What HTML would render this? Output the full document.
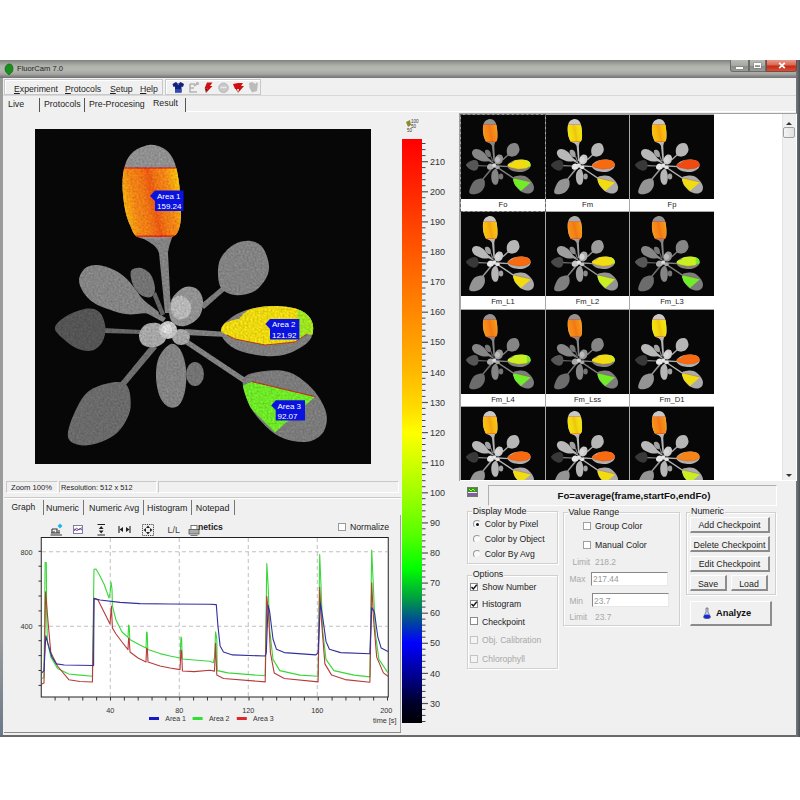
<!DOCTYPE html>
<html><head><meta charset="utf-8">
<style>
*{margin:0;padding:0;box-sizing:border-box}
html,body{width:800px;height:800px;background:#fff;overflow:hidden;font-family:"Liberation Sans",sans-serif;font-size:9px;color:#222}
.a{position:absolute}
.t{position:absolute;white-space:nowrap;line-height:1}
.gb{position:absolute;border:1px solid #d0d0d0;box-shadow:inset 1px 1px 0 #fff,1px 1px 0 #fff}
.gl{position:absolute;background:#f0f0f0;padding:0 1px;line-height:1;white-space:nowrap;color:#222}
.cb{position:absolute;width:8px;height:8px;border:1px solid #8a8a8a;background:#fff}
.cbd{border-color:#c4c4c4;background:#f4f4f4}
.btn{position:absolute;background:#f0f0f0;border-top:1px solid #fff;border-left:1px solid #fff;border-right:2px solid #8c8c8c;border-bottom:2px solid #8c8c8c}
.dis{color:#a8a8a8}
</style></head><body>

<div class="a" style="left:0;top:60px;width:800px;height:677px;background:#8c8e8e"></div>
<div class="a" style="left:0;top:60px;width:800px;height:18px;background:linear-gradient(#7c7e7c 0,#8a8c88 1px,#b0b2ac 6px,#b4b6b0 10px,#a4a6a2 14px,#7c7c7c 17px,#727272 18px)"></div>
<div class="a" style="left:0;top:78px;width:3px;height:659px;background:linear-gradient(#9a9c9c,#9a9c9c 85%,#6a7888)"></div>
<div class="a" style="left:3px;top:78px;width:793px;height:657px;background:#f0f0f0"></div>
<div class="a" style="left:0;top:735px;width:800px;height:2px;background:#6a6a6a"></div>
<div class="a" style="left:796px;top:60px;width:4px;height:677px;background:linear-gradient(90deg,#7a7a7a,#4a5058)"></div>
<div class="a" style="left:730px;top:60px;width:19px;height:12px;background:linear-gradient(#b8bab6,#a6a8a4 50%,#8a8c8a 55%,#9a9c9a);border:1px solid #6a6c6a;border-top:none;border-radius:0 0 0 3px"></div>
<div class="a" style="left:736px;top:67px;width:7px;height:2px;background:#fff;box-shadow:0 0 1px #444"></div>
<div class="a" style="left:749px;top:60px;width:17px;height:12px;background:linear-gradient(#b8bab6,#a6a8a4 50%,#8a8c8a 55%,#9a9c9a);border:1px solid #6a6c6a;border-top:none"></div>
<div class="a" style="left:753.5px;top:63px;width:7px;height:5px;border:1.5px solid #fff;border-top-width:2px;box-shadow:0 0 1px #444"></div>
<div class="a" style="left:766px;top:60px;width:31px;height:12px;background:linear-gradient(#e89888,#d86a58 45%,#c42a14 55%,#d65038);border:1px solid #7a4a40;border-top:none;border-radius:0 0 3px 0"></div>
<svg class="a" style="left:778px;top:62px" width="8" height="7" viewBox="0 0 8 7"><path d="M1.2 0.8 L6.8 6.2 M6.8 0.8 L1.2 6.2" stroke="#fff" stroke-width="1.8"/></svg>
<svg class="a" style="left:4px;top:63px" width="10" height="13" viewBox="0 0 10 13"><path d="M5 12 C3 10 1 9 1 6 C1 3 3 1 5 1 C8 1 9 3 9 6 C9 9 7 10 5 12Z" fill="#1b8f1b" stroke="#0a5a0a" stroke-width="0.6"/></svg>
<div class="t" style="left:17px;top:65.07px;font-size:7.6px;color:#1e1e1e">FluorCam 7.0</div>
<div class="a" style="left:3px;top:78px;width:793px;height:18px;background:#f0f0f0;border-bottom:1px solid #d8d8d8"></div>
<div class="a" style="left:4px;top:79px;width:159px;height:16px;border:1px solid #c8c8c8;box-shadow:inset 1px 1px 0 #fff"></div>
<div class="a" style="left:165px;top:79px;width:96px;height:16px;border:1px solid #c8c8c8;box-shadow:inset 1px 1px 0 #fff"></div>
<div class="t" style="left:14px;top:84.74px;font-size:8.7px;color:#1e1e1e"><u>E</u>xperiment</div>
<div class="t" style="left:65px;top:84.74px;font-size:8.7px;color:#1e1e1e"><u>P</u>rotocols</div>
<div class="t" style="left:110px;top:84.74px;font-size:8.7px;color:#1e1e1e"><u>S</u>etup</div>
<div class="t" style="left:140px;top:84.74px;font-size:8.7px;color:#1e1e1e"><u>H</u>elp</div>
<svg class="a" style="left:170px;top:80px" width="92" height="14" viewBox="0 0 92 14">
<path d="M2.5 4 L6 2 L7.5 3.2 L9 3.2 L10.5 2 L14 4 L13 7 L11.5 6.5 L11.5 12.5 L5 12.5 L5 6.5 L3.5 7Z" fill="#14207a"/><path d="M5 9 L11.5 9 L11.5 12.5 L5 12.5Z" fill="#2a4ab8"/><path d="M7 3.5 L9.5 3.5 L8.2 5Z" fill="#8ab0ff"/>
<path d="M20 4 L25 4 M20 4 L20 12 L27 12 M20 8 L24 8 M24 6 L28 3 M26 3 L28 3 L28 5" stroke="#b4b4b4" stroke-width="1.6" fill="none"/>
<path d="M37 2.5 L42.5 2.5 L40 6 L42.5 6 L36 13 L37.5 8.5 L34.5 8.5Z" fill="#d01010"/><path d="M36 13 L37.5 8.5 L35 8.5Z" fill="#600"/>
<circle cx="53.5" cy="7.8" r="4.8" fill="#c8c8c8" stroke="#b0b0b0" stroke-width="0.8"/><path d="M50.5 7.5 L56.5 7.5" stroke="#e8e8e8" stroke-width="1.5"/>
<path d="M63 4 L68 3 L73 3 L71 6 L74 6 L68 13 L69 9 L65 9Z" fill="#d01010"/><path d="M66 9 L68 13 L67 9Z" fill="#500"/>
<path d="M79 3 L82 2 L86 4 L86 2.5 L88 3 L87 11 L82 12.5 L79.5 8Z" fill="#bcbcbc"/>
</svg>
<div class="t" style="left:8px;top:100.35px;font-size:8.8px;color:#1e1e1e">Live</div>
<div class="t" style="left:44px;top:100.35px;font-size:8.8px;color:#1e1e1e">Protocols</div>
<div class="t" style="left:89px;top:100.35px;font-size:8.8px;color:#1e1e1e">Pre-Procesing</div>
<div class="t" style="left:153px;top:98.85px;font-size:8.8px;color:#1e1e1e">Result</div>
<div class="a" style="left:39px;top:98px;width:1px;height:14px;background:#555"></div>
<div class="a" style="left:84px;top:98px;width:1px;height:14px;background:#555"></div>
<div class="a" style="left:185px;top:98px;width:1px;height:14px;background:#555"></div>
<div class="a" style="left:186px;top:111px;width:610px;height:1px;background:#fff"></div>
<svg width="0" height="0" style="position:absolute"><defs>
<filter id="soft" x="-5%" y="-5%" width="110%" height="110%"><feGaussianBlur stdDeviation="0.7"/></filter>
<linearGradient id="eg1" x1="0" x2="1" y1="0.62" y2="0.38"><stop offset="0" stop-color="#ff0" stop-opacity="0.55"/><stop offset="0.25" stop-color="#ff0" stop-opacity="0.1"/><stop offset="0.55" stop-color="#d00" stop-opacity="0.25"/><stop offset="0.8" stop-color="#ff0" stop-opacity="0.1"/><stop offset="1" stop-color="#ff0" stop-opacity="0.55"/></linearGradient>
<clipPath id="c1"><path d="M113.8 16.0 C118.8 15.3 124.1 17.0 128.0 19.0 C131.9 21.0 134.7 24.2 137.0 28.0 C139.3 31.8 140.7 36.3 142.0 42.0 C143.3 47.7 144.3 55.7 145.0 62.0 C145.7 68.3 146.0 74.3 146.0 80.0 C146.0 85.7 146.2 91.5 145.0 96.0 C143.8 100.5 143.2 104.7 139.0 107.0 C134.8 109.3 126.1 109.8 120.0 110.0 C113.9 110.2 106.7 110.3 102.5 108.0 C98.3 105.7 97.1 100.7 95.0 96.0 C92.9 91.3 91.2 86.7 90.0 80.0 C88.8 73.3 87.5 63.3 87.5 56.0 C87.5 48.7 88.2 41.5 90.0 36.0 C91.8 30.5 94.0 26.3 98.0 23.0 C102.0 19.7 108.8 16.7 113.8 16.0Z"/></clipPath>
<clipPath id="c2"><path d="M186.0 201.0 C186.3 197.7 189.0 194.8 192.0 192.0 C195.0 189.2 199.3 186.2 204.0 184.0 C208.7 181.8 214.0 180.2 220.0 179.0 C226.0 177.8 233.0 176.8 240.0 177.0 C247.0 177.2 256.2 178.0 262.0 180.0 C267.8 182.0 272.3 185.3 275.0 189.0 C277.7 192.7 278.5 197.8 278.0 202.0 C277.5 206.2 276.3 210.2 272.0 214.0 C267.7 217.8 259.0 222.8 252.0 225.0 C245.0 227.2 237.8 227.5 230.0 227.0 C222.2 226.5 211.7 224.5 205.0 222.0 C198.3 219.5 193.2 215.5 190.0 212.0 C186.8 208.5 185.7 204.3 186.0 201.0Z"/></clipPath>
<clipPath id="c3"><path d="M208.5 249.5 C211.2 244.3 221.8 243.0 229.5 242.0 C237.2 241.0 247.0 240.5 255.0 243.5 C263.0 246.5 271.5 253.4 277.5 260.0 C283.5 266.6 289.1 276.0 291.0 283.0 C292.9 290.0 291.5 297.2 289.0 302.0 C286.5 306.8 281.2 310.3 276.0 312.0 C270.8 313.7 264.0 313.2 258.0 312.0 C252.0 310.8 245.7 308.7 240.0 305.0 C234.3 301.3 228.5 295.3 224.0 290.0 C219.5 284.7 215.6 279.8 213.0 273.0 C210.4 266.2 205.8 254.7 208.5 249.5Z"/></clipPath>
<g id="plant"><rect width="336" height="335" fill="#070707"/><g filter="url(#soft)">
<path d="M102 106 C112 112 122 116 124 124 L130 184 L136 184 L133 124 C134 116 136 112 138 106Z" fill="#858585"/>
<path d="M104 180 L128 193 L131 189 L108 176Z" fill="#838383"/>
<path d="M68 199 L106 201 L106 205 L68 204Z" fill="#686868"/>
<path d="M150 200 L192 203 L192 208 L150 206Z" fill="#808080"/>
<path d="M152 210 L212 250 L210 255 L150 215Z" fill="#838383"/>
<path d="M117 215 L122 219 L90 257 L85 254Z" fill="#707070"/>
<path d="M165 176 L169 180 L194 158 L190 155Z" fill="#7e7e7e"/>
<path d="M117 165 L121 163 L130 185 L126 187Z" fill="#646464"/>
<path d="M113.8 16.0 C118.8 15.3 124.1 17.0 128.0 19.0 C131.9 21.0 134.7 24.2 137.0 28.0 C139.3 31.8 140.7 36.3 142.0 42.0 C143.3 47.7 144.3 55.7 145.0 62.0 C145.7 68.3 146.0 74.3 146.0 80.0 C146.0 85.7 146.2 91.5 145.0 96.0 C143.8 100.5 143.2 104.7 139.0 107.0 C134.8 109.3 126.1 109.8 120.0 110.0 C113.9 110.2 106.7 110.3 102.5 108.0 C98.3 105.7 97.1 100.7 95.0 96.0 C92.9 91.3 91.2 86.7 90.0 80.0 C88.8 73.3 87.5 63.3 87.5 56.0 C87.5 48.7 88.2 41.5 90.0 36.0 C91.8 30.5 94.0 26.3 98.0 23.0 C102.0 19.7 108.8 16.7 113.8 16.0Z" fill="#929292"/>
<path d="M96.0 142.0 C97.3 139.2 102.7 138.3 106.0 139.0 C109.3 139.7 113.7 142.5 116.0 146.0 C118.3 149.5 120.0 156.3 120.0 160.0 C120.0 163.7 118.3 167.0 116.0 168.0 C113.7 169.0 109.0 168.0 106.0 166.0 C103.0 164.0 99.7 160.0 98.0 156.0 C96.3 152.0 94.7 144.8 96.0 142.0Z" fill="#757575"/>
<path d="M44.0 150.6 C44.4 146.6 47.2 141.4 50.4 139.0 C53.6 136.6 58.1 135.6 63.0 136.0 C67.9 136.4 74.9 138.8 79.8 141.2 C84.7 143.6 88.9 147.3 92.4 150.6 C95.9 153.9 98.0 157.5 100.8 161.0 C103.6 164.5 105.3 167.7 109.2 171.6 C113.1 175.5 124.0 182.1 124.0 184.2 C124.0 186.3 114.5 184.0 109.2 184.2 C103.9 184.4 98.0 185.8 92.4 185.3 C86.8 184.8 81.2 182.9 75.6 181.0 C70.0 179.1 63.3 176.7 58.8 173.7 C54.2 170.7 50.8 167.0 48.3 163.2 C45.8 159.3 43.6 154.6 44.0 150.6Z" fill="#868686"/>
<path d="M20.0 198.5 C20.7 194.8 26.1 190.2 31.5 187.0 C36.9 183.8 46.9 180.1 52.5 179.6 C58.1 179.1 62.0 180.7 65.0 183.8 C68.0 187.0 70.0 193.6 70.4 198.5 C70.8 203.4 69.5 209.3 67.2 213.2 C64.9 217.0 60.9 220.5 56.7 221.6 C52.5 222.7 46.9 221.6 42.0 219.5 C37.1 217.4 31.0 212.5 27.3 209.0 C23.6 205.5 19.3 202.2 20.0 198.5Z" fill="#575757"/>
<path d="M186.0 159.0 C183.2 154.8 182.8 146.3 183.0 141.0 C183.2 135.7 184.2 131.3 187.0 127.0 C189.8 122.7 195.2 117.5 200.0 115.0 C204.8 112.5 211.3 111.3 216.0 112.0 C220.7 112.7 225.0 114.8 228.0 119.0 C231.0 123.2 233.7 131.7 234.0 137.0 C234.3 142.3 232.7 146.7 230.0 151.0 C227.3 155.3 223.0 160.5 218.0 163.0 C213.0 165.5 205.3 166.7 200.0 166.0 C194.7 165.3 188.8 163.2 186.0 159.0Z" fill="#858585"/>
<path d="M186.0 201.0 C186.3 197.7 189.0 194.8 192.0 192.0 C195.0 189.2 199.3 186.2 204.0 184.0 C208.7 181.8 214.0 180.2 220.0 179.0 C226.0 177.8 233.0 176.8 240.0 177.0 C247.0 177.2 256.2 178.0 262.0 180.0 C267.8 182.0 272.3 185.3 275.0 189.0 C277.7 192.7 278.5 197.8 278.0 202.0 C277.5 206.2 276.3 210.2 272.0 214.0 C267.7 217.8 259.0 222.8 252.0 225.0 C245.0 227.2 237.8 227.5 230.0 227.0 C222.2 226.5 211.7 224.5 205.0 222.0 C198.3 219.5 193.2 215.5 190.0 212.0 C186.8 208.5 185.7 204.3 186.0 201.0Z" fill="#818181"/>
<path d="M208.5 249.5 C211.2 244.3 221.8 243.0 229.5 242.0 C237.2 241.0 247.0 240.5 255.0 243.5 C263.0 246.5 271.5 253.4 277.5 260.0 C283.5 266.6 289.1 276.0 291.0 283.0 C292.9 290.0 291.5 297.2 289.0 302.0 C286.5 306.8 281.2 310.3 276.0 312.0 C270.8 313.7 264.0 313.2 258.0 312.0 C252.0 310.8 245.7 308.7 240.0 305.0 C234.3 301.3 228.5 295.3 224.0 290.0 C219.5 284.7 215.6 279.8 213.0 273.0 C210.4 266.2 205.8 254.7 208.5 249.5Z" fill="#7d7d7d"/>
<path d="M33.6 309.9 C31.9 306.0 33.2 300.0 35.7 293.0 C38.2 286.0 43.8 273.8 48.3 267.8 C52.8 261.9 57.0 259.8 63.0 257.3 C69.0 254.9 78.9 252.8 84.0 253.1 C89.1 253.4 91.6 255.2 93.5 259.4 C95.4 263.6 96.1 272.7 95.6 278.3 C95.1 283.9 92.9 288.4 90.3 293.0 C87.7 297.6 84.3 302.2 79.8 305.7 C75.2 309.2 68.6 312.2 63.0 314.0 C57.4 315.8 51.1 316.9 46.2 316.2 C41.3 315.5 35.4 313.8 33.6 309.9Z" fill="#6c6c6c"/>
<path d="M136.0 215.0 C139.7 214.0 143.5 217.8 146.0 222.0 C148.5 226.2 150.3 233.3 151.0 240.0 C151.7 246.7 151.2 256.0 150.0 262.0 C148.8 268.0 146.7 273.3 144.0 276.0 C141.3 278.7 137.2 279.3 134.0 278.0 C130.8 276.7 127.2 273.0 125.0 268.0 C122.8 263.0 121.2 254.7 121.0 248.0 C120.8 241.3 121.5 233.5 124.0 228.0 C126.5 222.5 132.3 216.0 136.0 215.0Z" fill="#858585"/>
<ellipse cx="160" cy="245" rx="9" ry="12" fill="#757575"/>
<path d="M138.0 168.0 C140.7 164.0 146.0 159.3 150.0 158.0 C154.0 156.7 159.0 157.7 162.0 160.0 C165.0 162.3 167.7 167.3 168.0 172.0 C168.3 176.7 167.0 183.8 164.0 188.0 C161.0 192.2 154.3 196.0 150.0 197.0 C145.7 198.0 140.7 196.5 138.0 194.0 C135.3 191.5 134.0 186.3 134.0 182.0 C134.0 177.7 135.3 172.0 138.0 168.0Z" fill="#949494"/>
<path d="M138 170 C144 164 152 166 156 176 C158 186 150 192 142 190 C136 186 134 176 138 170Z" fill="#bababa"/>
<path d="M104.0 206.0 C104.3 202.7 107.0 198.0 110.0 196.0 C113.0 194.0 118.7 193.3 122.0 194.0 C125.3 194.7 128.7 197.0 130.0 200.0 C131.3 203.0 131.7 209.0 130.0 212.0 C128.3 215.0 123.7 217.3 120.0 218.0 C116.3 218.7 110.7 218.0 108.0 216.0 C105.3 214.0 103.7 209.3 104.0 206.0Z" fill="#a9a9a9"/>
<ellipse cx="146" cy="208" rx="9" ry="8" fill="#a7a7a7"/>
<circle cx="133" cy="201" r="9" fill="#c5c5c5"/><circle cx="132" cy="200" r="5" fill="#dedede"/>
</g>
<g clip-path="url(#c1)"><rect x="80" y="39" width="70" height="69" fill="var(--a1)"/><rect x="86" y="39" width="60" height="69" fill="url(#eg1)" style="opacity:var(--eo,1)"/><rect x="80" y="38.5" width="70" height="1" fill="#e01010"/><rect x="80" y="106.5" width="70" height="1.2" fill="#e01010"/></g>
<g clip-path="url(#c2)"><path d="M182 200 L190 194 L198 191 L204 190 L208 185 L220 176 L240 173 L282 178 L282 206 L272 205 L260 213 L230 216 L200 210 L190 205Z" fill="var(--a2)"/><path d="M262 176 L282 186 L282 206 L272 205 L264 211Z" fill="var(--a2b)"/><path d="M192 206 L200 210 L230 216 L260 213 L272 205" stroke="#c03010" stroke-width="0.9" fill="none"/></g>
<g clip-path="url(#c3)"><path d="M206 257 L216.7 253 L279.7 268 L240 303.5 L214.5 278Z" fill="var(--a3)"/><path d="M216.7 252.5 L279.7 267.5" stroke="#c83010" stroke-width="1"/></g>
</g>
<g id="plantM"><rect width="336" height="335" fill="#070707"/><g filter="url(#soft)">
<path d="M102 106 C112 112 122 116 124 124 L130 184 L136 184 L133 124 C134 116 136 112 138 106Z" fill="#9c9c9c"/>
<path d="M104 180 L128 193 L131 189 L108 176Z" fill="#9a9a9a"/>
<path d="M68 199 L106 201 L106 205 L68 204Z" fill="#7b7b7b"/>
<path d="M150 200 L192 203 L192 208 L150 206Z" fill="#979797"/>
<path d="M152 210 L212 250 L210 255 L150 215Z" fill="#9a9a9a"/>
<path d="M117 215 L122 219 L90 257 L85 254Z" fill="#848484"/>
<path d="M165 176 L169 180 L194 158 L190 155Z" fill="#949494"/>
<path d="M117 165 L121 163 L130 185 L126 187Z" fill="#767676"/>
<path d="M113.8 16.0 C118.8 15.3 124.1 17.0 128.0 19.0 C131.9 21.0 134.7 24.2 137.0 28.0 C139.3 31.8 140.7 36.3 142.0 42.0 C143.3 47.7 144.3 55.7 145.0 62.0 C145.7 68.3 146.0 74.3 146.0 80.0 C146.0 85.7 146.2 91.5 145.0 96.0 C143.8 100.5 143.2 104.7 139.0 107.0 C134.8 109.3 126.1 109.8 120.0 110.0 C113.9 110.2 106.7 110.3 102.5 108.0 C98.3 105.7 97.1 100.7 95.0 96.0 C92.9 91.3 91.2 86.7 90.0 80.0 C88.8 73.3 87.5 63.3 87.5 56.0 C87.5 48.7 88.2 41.5 90.0 36.0 C91.8 30.5 94.0 26.3 98.0 23.0 C102.0 19.7 108.8 16.7 113.8 16.0Z" fill="#acacac"/>
<path d="M96.0 142.0 C97.3 139.2 102.7 138.3 106.0 139.0 C109.3 139.7 113.7 142.5 116.0 146.0 C118.3 149.5 120.0 156.3 120.0 160.0 C120.0 163.7 118.3 167.0 116.0 168.0 C113.7 169.0 109.0 168.0 106.0 166.0 C103.0 164.0 99.7 160.0 98.0 156.0 C96.3 152.0 94.7 144.8 96.0 142.0Z" fill="#8a8a8a"/>
<path d="M44.0 150.6 C44.4 146.6 47.2 141.4 50.4 139.0 C53.6 136.6 58.1 135.6 63.0 136.0 C67.9 136.4 74.9 138.8 79.8 141.2 C84.7 143.6 88.9 147.3 92.4 150.6 C95.9 153.9 98.0 157.5 100.8 161.0 C103.6 164.5 105.3 167.7 109.2 171.6 C113.1 175.5 124.0 182.1 124.0 184.2 C124.0 186.3 114.5 184.0 109.2 184.2 C103.9 184.4 98.0 185.8 92.4 185.3 C86.8 184.8 81.2 182.9 75.6 181.0 C70.0 179.1 63.3 176.7 58.8 173.7 C54.2 170.7 50.8 167.0 48.3 163.2 C45.8 159.3 43.6 154.6 44.0 150.6Z" fill="#9f9f9f"/>
<path d="M20.0 198.5 C20.7 194.8 26.1 190.2 31.5 187.0 C36.9 183.8 46.9 180.1 52.5 179.6 C58.1 179.1 62.0 180.7 65.0 183.8 C68.0 187.0 70.0 193.6 70.4 198.5 C70.8 203.4 69.5 209.3 67.2 213.2 C64.9 217.0 60.9 220.5 56.7 221.6 C52.5 222.7 46.9 221.6 42.0 219.5 C37.1 217.4 31.0 212.5 27.3 209.0 C23.6 205.5 19.3 202.2 20.0 198.5Z" fill="#494949"/>
<path d="M186.0 159.0 C183.2 154.8 182.8 146.3 183.0 141.0 C183.2 135.7 184.2 131.3 187.0 127.0 C189.8 122.7 195.2 117.5 200.0 115.0 C204.8 112.5 211.3 111.3 216.0 112.0 C220.7 112.7 225.0 114.8 228.0 119.0 C231.0 123.2 233.7 131.7 234.0 137.0 C234.3 142.3 232.7 146.7 230.0 151.0 C227.3 155.3 223.0 160.5 218.0 163.0 C213.0 165.5 205.3 166.7 200.0 166.0 C194.7 165.3 188.8 163.2 186.0 159.0Z" fill="#9c9c9c"/>
<path d="M186.0 201.0 C186.3 197.7 189.0 194.8 192.0 192.0 C195.0 189.2 199.3 186.2 204.0 184.0 C208.7 181.8 214.0 180.2 220.0 179.0 C226.0 177.8 233.0 176.8 240.0 177.0 C247.0 177.2 256.2 178.0 262.0 180.0 C267.8 182.0 272.3 185.3 275.0 189.0 C277.7 192.7 278.5 197.8 278.0 202.0 C277.5 206.2 276.3 210.2 272.0 214.0 C267.7 217.8 259.0 222.8 252.0 225.0 C245.0 227.2 237.8 227.5 230.0 227.0 C222.2 226.5 211.7 224.5 205.0 222.0 C198.3 219.5 193.2 215.5 190.0 212.0 C186.8 208.5 185.7 204.3 186.0 201.0Z" fill="#989898"/>
<path d="M208.5 249.5 C211.2 244.3 221.8 243.0 229.5 242.0 C237.2 241.0 247.0 240.5 255.0 243.5 C263.0 246.5 271.5 253.4 277.5 260.0 C283.5 266.6 289.1 276.0 291.0 283.0 C292.9 290.0 291.5 297.2 289.0 302.0 C286.5 306.8 281.2 310.3 276.0 312.0 C270.8 313.7 264.0 313.2 258.0 312.0 C252.0 310.8 245.7 308.7 240.0 305.0 C234.3 301.3 228.5 295.3 224.0 290.0 C219.5 284.7 215.6 279.8 213.0 273.0 C210.4 266.2 205.8 254.7 208.5 249.5Z" fill="#939393"/>
<path d="M33.6 309.9 C31.9 306.0 33.2 300.0 35.7 293.0 C38.2 286.0 43.8 273.8 48.3 267.8 C52.8 261.9 57.0 259.8 63.0 257.3 C69.0 254.9 78.9 252.8 84.0 253.1 C89.1 253.4 91.6 255.2 93.5 259.4 C95.4 263.6 96.1 272.7 95.6 278.3 C95.1 283.9 92.9 288.4 90.3 293.0 C87.7 297.6 84.3 302.2 79.8 305.7 C75.2 309.2 68.6 312.2 63.0 314.0 C57.4 315.8 51.1 316.9 46.2 316.2 C41.3 315.5 35.4 313.8 33.6 309.9Z" fill="#7f7f7f"/>
<path d="M136.0 215.0 C139.7 214.0 143.5 217.8 146.0 222.0 C148.5 226.2 150.3 233.3 151.0 240.0 C151.7 246.7 151.2 256.0 150.0 262.0 C148.8 268.0 146.7 273.3 144.0 276.0 C141.3 278.7 137.2 279.3 134.0 278.0 C130.8 276.7 127.2 273.0 125.0 268.0 C122.8 263.0 121.2 254.7 121.0 248.0 C120.8 241.3 121.5 233.5 124.0 228.0 C126.5 222.5 132.3 216.0 136.0 215.0Z" fill="#9c9c9c"/>
<ellipse cx="160" cy="245" rx="9" ry="12" fill="#8a8a8a"/>
<path d="M138.0 168.0 C140.7 164.0 146.0 159.3 150.0 158.0 C154.0 156.7 159.0 157.7 162.0 160.0 C165.0 162.3 167.7 167.3 168.0 172.0 C168.3 176.7 167.0 183.8 164.0 188.0 C161.0 192.2 154.3 196.0 150.0 197.0 C145.7 198.0 140.7 196.5 138.0 194.0 C135.3 191.5 134.0 186.3 134.0 182.0 C134.0 177.7 135.3 172.0 138.0 168.0Z" fill="#aeaeae"/>
<path d="M138 170 C144 164 152 166 156 176 C158 186 150 192 142 190 C136 186 134 176 138 170Z" fill="#d7d7d7"/>
<path d="M104.0 206.0 C104.3 202.7 107.0 198.0 110.0 196.0 C113.0 194.0 118.7 193.3 122.0 194.0 C125.3 194.7 128.7 197.0 130.0 200.0 C131.3 203.0 131.7 209.0 130.0 212.0 C128.3 215.0 123.7 217.3 120.0 218.0 C116.3 218.7 110.7 218.0 108.0 216.0 C105.3 214.0 103.7 209.3 104.0 206.0Z" fill="#c7c7c7"/>
<ellipse cx="146" cy="208" rx="9" ry="8" fill="#c5c5c5"/>
<circle cx="133" cy="201" r="9" fill="#dadada"/><circle cx="132" cy="200" r="5" fill="#eaeaea"/>
</g>
<g clip-path="url(#c1)"><rect x="80" y="39" width="70" height="69" fill="var(--a1)"/><rect x="86" y="39" width="60" height="69" fill="url(#eg1)" style="opacity:var(--eo,1)"/><rect x="80" y="38.5" width="70" height="1" fill="#e01010"/><rect x="80" y="106.5" width="70" height="1.2" fill="#e01010"/></g>
<g clip-path="url(#c2)"><path d="M182 200 L190 194 L198 191 L204 190 L208 185 L220 176 L240 173 L282 178 L282 206 L272 205 L260 213 L230 216 L200 210 L190 205Z" fill="var(--a2)"/><path d="M262 176 L282 186 L282 206 L272 205 L264 211Z" fill="var(--a2b)"/><path d="M192 206 L200 210 L230 216 L260 213 L272 205" stroke="#c03010" stroke-width="0.9" fill="none"/></g>
<g clip-path="url(#c3)"><path d="M206 257 L216.7 253 L279.7 268 L240 303.5 L214.5 278Z" fill="var(--a3)"/><path d="M216.7 252.5 L279.7 267.5" stroke="#c83010" stroke-width="1"/></g>
</g>
<g id="plantB"><rect width="336" height="335" fill="#070707"/><g filter="url(#soft)">
<path d="M102 106 C112 112 122 116 124 124 L130 184 L136 184 L133 124 C134 116 136 112 138 106Z" fill="#b6b6b6"/>
<path d="M104 180 L128 193 L131 189 L108 176Z" fill="#b3b3b3"/>
<path d="M68 199 L106 201 L106 205 L68 204Z" fill="#8f8f8f"/>
<path d="M150 200 L192 203 L192 208 L150 206Z" fill="#afafaf"/>
<path d="M152 210 L212 250 L210 255 L150 215Z" fill="#b3b3b3"/>
<path d="M117 215 L122 219 L90 257 L85 254Z" fill="#999999"/>
<path d="M165 176 L169 180 L194 158 L190 155Z" fill="#acacac"/>
<path d="M117 165 L121 163 L130 185 L126 187Z" fill="#898989"/>
<path d="M113.8 16.0 C118.8 15.3 124.1 17.0 128.0 19.0 C131.9 21.0 134.7 24.2 137.0 28.0 C139.3 31.8 140.7 36.3 142.0 42.0 C143.3 47.7 144.3 55.7 145.0 62.0 C145.7 68.3 146.0 74.3 146.0 80.0 C146.0 85.7 146.2 91.5 145.0 96.0 C143.8 100.5 143.2 104.7 139.0 107.0 C134.8 109.3 126.1 109.8 120.0 110.0 C113.9 110.2 106.7 110.3 102.5 108.0 C98.3 105.7 97.1 100.7 95.0 96.0 C92.9 91.3 91.2 86.7 90.0 80.0 C88.8 73.3 87.5 63.3 87.5 56.0 C87.5 48.7 88.2 41.5 90.0 36.0 C91.8 30.5 94.0 26.3 98.0 23.0 C102.0 19.7 108.8 16.7 113.8 16.0Z" fill="#c8c8c8"/>
<path d="M96.0 142.0 C97.3 139.2 102.7 138.3 106.0 139.0 C109.3 139.7 113.7 142.5 116.0 146.0 C118.3 149.5 120.0 156.3 120.0 160.0 C120.0 163.7 118.3 167.0 116.0 168.0 C113.7 169.0 109.0 168.0 106.0 166.0 C103.0 164.0 99.7 160.0 98.0 156.0 C96.3 152.0 94.7 144.8 96.0 142.0Z" fill="#a1a1a1"/>
<path d="M44.0 150.6 C44.4 146.6 47.2 141.4 50.4 139.0 C53.6 136.6 58.1 135.6 63.0 136.0 C67.9 136.4 74.9 138.8 79.8 141.2 C84.7 143.6 88.9 147.3 92.4 150.6 C95.9 153.9 98.0 157.5 100.8 161.0 C103.6 164.5 105.3 167.7 109.2 171.6 C113.1 175.5 124.0 182.1 124.0 184.2 C124.0 186.3 114.5 184.0 109.2 184.2 C103.9 184.4 98.0 185.8 92.4 185.3 C86.8 184.8 81.2 182.9 75.6 181.0 C70.0 179.1 63.3 176.7 58.8 173.7 C54.2 170.7 50.8 167.0 48.3 163.2 C45.8 159.3 43.6 154.6 44.0 150.6Z" fill="#b8b8b8"/>
<path d="M20.0 198.5 C20.7 194.8 26.1 190.2 31.5 187.0 C36.9 183.8 46.9 180.1 52.5 179.6 C58.1 179.1 62.0 180.7 65.0 183.8 C68.0 187.0 70.0 193.6 70.4 198.5 C70.8 203.4 69.5 209.3 67.2 213.2 C64.9 217.0 60.9 220.5 56.7 221.6 C52.5 222.7 46.9 221.6 42.0 219.5 C37.1 217.4 31.0 212.5 27.3 209.0 C23.6 205.5 19.3 202.2 20.0 198.5Z" fill="#373737"/>
<path d="M186.0 159.0 C183.2 154.8 182.8 146.3 183.0 141.0 C183.2 135.7 184.2 131.3 187.0 127.0 C189.8 122.7 195.2 117.5 200.0 115.0 C204.8 112.5 211.3 111.3 216.0 112.0 C220.7 112.7 225.0 114.8 228.0 119.0 C231.0 123.2 233.7 131.7 234.0 137.0 C234.3 142.3 232.7 146.7 230.0 151.0 C227.3 155.3 223.0 160.5 218.0 163.0 C213.0 165.5 205.3 166.7 200.0 166.0 C194.7 165.3 188.8 163.2 186.0 159.0Z" fill="#b6b6b6"/>
<path d="M186.0 201.0 C186.3 197.7 189.0 194.8 192.0 192.0 C195.0 189.2 199.3 186.2 204.0 184.0 C208.7 181.8 214.0 180.2 220.0 179.0 C226.0 177.8 233.0 176.8 240.0 177.0 C247.0 177.2 256.2 178.0 262.0 180.0 C267.8 182.0 272.3 185.3 275.0 189.0 C277.7 192.7 278.5 197.8 278.0 202.0 C277.5 206.2 276.3 210.2 272.0 214.0 C267.7 217.8 259.0 222.8 252.0 225.0 C245.0 227.2 237.8 227.5 230.0 227.0 C222.2 226.5 211.7 224.5 205.0 222.0 C198.3 219.5 193.2 215.5 190.0 212.0 C186.8 208.5 185.7 204.3 186.0 201.0Z" fill="#b0b0b0"/>
<path d="M208.5 249.5 C211.2 244.3 221.8 243.0 229.5 242.0 C237.2 241.0 247.0 240.5 255.0 243.5 C263.0 246.5 271.5 253.4 277.5 260.0 C283.5 266.6 289.1 276.0 291.0 283.0 C292.9 290.0 291.5 297.2 289.0 302.0 C286.5 306.8 281.2 310.3 276.0 312.0 C270.8 313.7 264.0 313.2 258.0 312.0 C252.0 310.8 245.7 308.7 240.0 305.0 C234.3 301.3 228.5 295.3 224.0 290.0 C219.5 284.7 215.6 279.8 213.0 273.0 C210.4 266.2 205.8 254.7 208.5 249.5Z" fill="#ababab"/>
<path d="M33.6 309.9 C31.9 306.0 33.2 300.0 35.7 293.0 C38.2 286.0 43.8 273.8 48.3 267.8 C52.8 261.9 57.0 259.8 63.0 257.3 C69.0 254.9 78.9 252.8 84.0 253.1 C89.1 253.4 91.6 255.2 93.5 259.4 C95.4 263.6 96.1 272.7 95.6 278.3 C95.1 283.9 92.9 288.4 90.3 293.0 C87.7 297.6 84.3 302.2 79.8 305.7 C75.2 309.2 68.6 312.2 63.0 314.0 C57.4 315.8 51.1 316.9 46.2 316.2 C41.3 315.5 35.4 313.8 33.6 309.9Z" fill="#949494"/>
<path d="M136.0 215.0 C139.7 214.0 143.5 217.8 146.0 222.0 C148.5 226.2 150.3 233.3 151.0 240.0 C151.7 246.7 151.2 256.0 150.0 262.0 C148.8 268.0 146.7 273.3 144.0 276.0 C141.3 278.7 137.2 279.3 134.0 278.0 C130.8 276.7 127.2 273.0 125.0 268.0 C122.8 263.0 121.2 254.7 121.0 248.0 C120.8 241.3 121.5 233.5 124.0 228.0 C126.5 222.5 132.3 216.0 136.0 215.0Z" fill="#b6b6b6"/>
<ellipse cx="160" cy="245" rx="9" ry="12" fill="#a1a1a1"/>
<path d="M138.0 168.0 C140.7 164.0 146.0 159.3 150.0 158.0 C154.0 156.7 159.0 157.7 162.0 160.0 C165.0 162.3 167.7 167.3 168.0 172.0 C168.3 176.7 167.0 183.8 164.0 188.0 C161.0 192.2 154.3 196.0 150.0 197.0 C145.7 198.0 140.7 196.5 138.0 194.0 C135.3 191.5 134.0 186.3 134.0 182.0 C134.0 177.7 135.3 172.0 138.0 168.0Z" fill="#cacaca"/>
<path d="M138 170 C144 164 152 166 156 176 C158 186 150 192 142 190 C136 186 134 176 138 170Z" fill="#d7d7d7"/>
<path d="M104.0 206.0 C104.3 202.7 107.0 198.0 110.0 196.0 C113.0 194.0 118.7 193.3 122.0 194.0 C125.3 194.7 128.7 197.0 130.0 200.0 C131.3 203.0 131.7 209.0 130.0 212.0 C128.3 215.0 123.7 217.3 120.0 218.0 C116.3 218.7 110.7 218.0 108.0 216.0 C105.3 214.0 103.7 209.3 104.0 206.0Z" fill="#e7e7e7"/>
<ellipse cx="146" cy="208" rx="9" ry="8" fill="#e4e4e4"/>
<circle cx="133" cy="201" r="9" fill="#dadada"/><circle cx="132" cy="200" r="5" fill="#eaeaea"/>
</g>
<g clip-path="url(#c1)"><rect x="80" y="39" width="70" height="69" fill="var(--a1)"/><rect x="86" y="39" width="60" height="69" fill="url(#eg1)" style="opacity:var(--eo,1)"/><rect x="80" y="38.5" width="70" height="1" fill="#e01010"/><rect x="80" y="106.5" width="70" height="1.2" fill="#e01010"/></g>
<g clip-path="url(#c2)"><path d="M182 200 L190 194 L198 191 L204 190 L208 185 L220 176 L240 173 L282 178 L282 206 L272 205 L260 213 L230 216 L200 210 L190 205Z" fill="var(--a2)"/><path d="M262 176 L282 186 L282 206 L272 205 L264 211Z" fill="var(--a2b)"/><path d="M192 206 L200 210 L230 216 L260 213 L272 205" stroke="#c03010" stroke-width="0.9" fill="none"/></g>
<g clip-path="url(#c3)"><path d="M206 257 L216.7 253 L279.7 268 L240 303.5 L214.5 278Z" fill="var(--a3)"/><path d="M216.7 252.5 L279.7 267.5" stroke="#c83010" stroke-width="1"/></g>
</g>
<filter id="grain" x="0" y="0" width="100%" height="100%" color-interpolation-filters="sRGB"><feTurbulence type="fractalNoise" baseFrequency="0.5" numOctaves="2" seed="3" result="n"/><feColorMatrix in="n" type="matrix" values="1 0 0 0 0  1 0 0 0 0  1 0 0 0 0  0 0 0 0 1" result="g"/><feComposite in="SourceGraphic" in2="g" operator="arithmetic" k1="0.36" k2="0.80" k3="0" k4="0"/></filter>
</defs></svg>
<svg class="a" style="left:35px;top:129px" width="336" height="335" viewBox="0 0 336 335">
<use href="#plant" filter="url(#grain)" style="--a1:#f47818;--a2:#f0dc10;--a2b:#a0e820;--a3:#70ec28"/>
<g font-family="Liberation Sans" font-size="8" fill="#fff">
<path d="M115 67 L120 61.5 L148.5 61.5 L148.5 82 L120 82 L120 72Z" fill="#0a12e0"/>
<text x="122" y="69.7">Area 1</text><text x="122" y="80.4">159.24</text>
<path d="M230.4 195 L235 190 L264.4 190 L264.4 210.6 L235 210.6 L235 200Z" fill="#0a12e0"/>
<text x="237" y="198">Area 2</text><text x="237" y="208.5">121.92</text>
<path d="M236.2 276.5 L240.7 271.2 L270 271.2 L270 291.5 L240.7 291.5 L240.7 281Z" fill="#0a12e0"/>
<text x="242.5" y="279.5">Area 3</text><text x="242.5" y="290">92.07</text>
</g>
</svg>
<div class="a" style="left:6px;top:481px;width:52px;height:12px;border:1px solid #c8c8c8;border-right-color:#fff;border-bottom-color:#fff"></div>
<div class="t" style="left:11px;top:483.57px;font-size:7.6px;">Zoom 100%</div>
<div class="a" style="left:59px;top:481px;width:98px;height:12px;border:1px solid #c8c8c8;border-right-color:#fff;border-bottom-color:#fff"></div>
<div class="t" style="left:61px;top:483.74px;font-size:7.4px;">Resolution: 512 x 512</div>
<div class="a" style="left:158px;top:481px;width:241px;height:12px;border:1px solid #c8c8c8;border-right-color:#fff;border-bottom-color:#fff"></div>
<div class="a" style="left:402px;top:139px;width:20px;height:584px;background:linear-gradient(#ff0000 0.3%,#ff2800 9.0%,#ff4c00 16.8%,#ff7000 24.5%,#ff9400 32.2%,#ffb800 39.9%,#ffdc00 46.1%,#ffff00 50.3%,#d0ff00 55.4%,#a0ff00 60.6%,#50ff00 68.3%,#00ff00 73.5%,#00a040 78.6%,#005090 82.2%,#0000ff 86.3%,#000098 91.5%,#00002a 96.6%,#000000 100.3%)"></div>
<svg class="a" style="left:0;top:0" width="460" height="740"><g><rect x="422" y="721.0" width="3.5" height="1" fill="#444"/><rect x="422" y="714.9" width="3.5" height="1" fill="#444"/><rect x="422" y="708.9" width="3.5" height="1" fill="#444"/><rect x="422" y="702.9" width="6" height="1.2" fill="#555"/><rect x="422" y="696.9" width="3.5" height="1" fill="#444"/><rect x="422" y="690.9" width="3.5" height="1" fill="#444"/><rect x="422" y="684.8" width="3.5" height="1" fill="#444"/><rect x="422" y="678.8" width="3.5" height="1" fill="#444"/><rect x="422" y="672.8" width="6" height="1.2" fill="#555"/><rect x="422" y="666.8" width="3.5" height="1" fill="#444"/><rect x="422" y="660.8" width="3.5" height="1" fill="#444"/><rect x="422" y="654.7" width="3.5" height="1" fill="#444"/><rect x="422" y="648.7" width="3.5" height="1" fill="#444"/><rect x="422" y="642.7" width="6" height="1.2" fill="#555"/><rect x="422" y="636.7" width="3.5" height="1" fill="#444"/><rect x="422" y="630.7" width="3.5" height="1" fill="#444"/><rect x="422" y="624.6" width="3.5" height="1" fill="#444"/><rect x="422" y="618.6" width="3.5" height="1" fill="#444"/><rect x="422" y="612.6" width="6" height="1.2" fill="#555"/><rect x="422" y="606.6" width="3.5" height="1" fill="#444"/><rect x="422" y="600.6" width="3.5" height="1" fill="#444"/><rect x="422" y="594.5" width="3.5" height="1" fill="#444"/><rect x="422" y="588.5" width="3.5" height="1" fill="#444"/><rect x="422" y="582.5" width="6" height="1.2" fill="#555"/><rect x="422" y="576.5" width="3.5" height="1" fill="#444"/><rect x="422" y="570.5" width="3.5" height="1" fill="#444"/><rect x="422" y="564.4" width="3.5" height="1" fill="#444"/><rect x="422" y="558.4" width="3.5" height="1" fill="#444"/><rect x="422" y="552.4" width="6" height="1.2" fill="#555"/><rect x="422" y="546.4" width="3.5" height="1" fill="#444"/><rect x="422" y="540.4" width="3.5" height="1" fill="#444"/><rect x="422" y="534.3" width="3.5" height="1" fill="#444"/><rect x="422" y="528.3" width="3.5" height="1" fill="#444"/><rect x="422" y="522.3" width="6" height="1.2" fill="#555"/><rect x="422" y="516.3" width="3.5" height="1" fill="#444"/><rect x="422" y="510.3" width="3.5" height="1" fill="#444"/><rect x="422" y="504.2" width="3.5" height="1" fill="#444"/><rect x="422" y="498.2" width="3.5" height="1" fill="#444"/><rect x="422" y="492.2" width="6" height="1.2" fill="#555"/><rect x="422" y="486.2" width="3.5" height="1" fill="#444"/><rect x="422" y="480.2" width="3.5" height="1" fill="#444"/><rect x="422" y="474.1" width="3.5" height="1" fill="#444"/><rect x="422" y="468.1" width="3.5" height="1" fill="#444"/><rect x="422" y="462.1" width="6" height="1.2" fill="#555"/><rect x="422" y="456.1" width="3.5" height="1" fill="#444"/><rect x="422" y="450.1" width="3.5" height="1" fill="#444"/><rect x="422" y="444.0" width="3.5" height="1" fill="#444"/><rect x="422" y="438.0" width="3.5" height="1" fill="#444"/><rect x="422" y="432.0" width="6" height="1.2" fill="#555"/><rect x="422" y="426.0" width="3.5" height="1" fill="#444"/><rect x="422" y="420.0" width="3.5" height="1" fill="#444"/><rect x="422" y="413.9" width="3.5" height="1" fill="#444"/><rect x="422" y="407.9" width="3.5" height="1" fill="#444"/><rect x="422" y="401.9" width="6" height="1.2" fill="#555"/><rect x="422" y="395.9" width="3.5" height="1" fill="#444"/><rect x="422" y="389.9" width="3.5" height="1" fill="#444"/><rect x="422" y="383.8" width="3.5" height="1" fill="#444"/><rect x="422" y="377.8" width="3.5" height="1" fill="#444"/><rect x="422" y="371.8" width="6" height="1.2" fill="#555"/><rect x="422" y="365.8" width="3.5" height="1" fill="#444"/><rect x="422" y="359.8" width="3.5" height="1" fill="#444"/><rect x="422" y="353.7" width="3.5" height="1" fill="#444"/><rect x="422" y="347.7" width="3.5" height="1" fill="#444"/><rect x="422" y="341.7" width="6" height="1.2" fill="#555"/><rect x="422" y="335.7" width="3.5" height="1" fill="#444"/><rect x="422" y="329.7" width="3.5" height="1" fill="#444"/><rect x="422" y="323.6" width="3.5" height="1" fill="#444"/><rect x="422" y="317.6" width="3.5" height="1" fill="#444"/><rect x="422" y="311.6" width="6" height="1.2" fill="#555"/><rect x="422" y="305.6" width="3.5" height="1" fill="#444"/><rect x="422" y="299.6" width="3.5" height="1" fill="#444"/><rect x="422" y="293.5" width="3.5" height="1" fill="#444"/><rect x="422" y="287.5" width="3.5" height="1" fill="#444"/><rect x="422" y="281.5" width="6" height="1.2" fill="#555"/><rect x="422" y="275.5" width="3.5" height="1" fill="#444"/><rect x="422" y="269.5" width="3.5" height="1" fill="#444"/><rect x="422" y="263.4" width="3.5" height="1" fill="#444"/><rect x="422" y="257.4" width="3.5" height="1" fill="#444"/><rect x="422" y="251.4" width="6" height="1.2" fill="#555"/><rect x="422" y="245.4" width="3.5" height="1" fill="#444"/><rect x="422" y="239.4" width="3.5" height="1" fill="#444"/><rect x="422" y="233.3" width="3.5" height="1" fill="#444"/><rect x="422" y="227.3" width="3.5" height="1" fill="#444"/><rect x="422" y="221.3" width="6" height="1.2" fill="#555"/><rect x="422" y="215.3" width="3.5" height="1" fill="#444"/><rect x="422" y="209.3" width="3.5" height="1" fill="#444"/><rect x="422" y="203.2" width="3.5" height="1" fill="#444"/><rect x="422" y="197.2" width="3.5" height="1" fill="#444"/><rect x="422" y="191.2" width="6" height="1.2" fill="#555"/><rect x="422" y="185.2" width="3.5" height="1" fill="#444"/><rect x="422" y="179.2" width="3.5" height="1" fill="#444"/><rect x="422" y="173.1" width="3.5" height="1" fill="#444"/><rect x="422" y="167.1" width="3.5" height="1" fill="#444"/><rect x="422" y="161.1" width="6" height="1.2" fill="#555"/><rect x="422" y="155.1" width="3.5" height="1" fill="#444"/><rect x="422" y="149.1" width="3.5" height="1" fill="#444"/><rect x="422" y="143.0" width="3.5" height="1" fill="#444"/></g><g font-family="Liberation Sans" font-size="9" fill="#333"><text x="430" y="706.6">30</text><text x="430" y="676.5">40</text><text x="430" y="646.4">50</text><text x="430" y="616.3">60</text><text x="430" y="586.2">70</text><text x="430" y="556.1">80</text><text x="430" y="526.0">90</text><text x="430" y="495.9">100</text><text x="430" y="465.8">110</text><text x="430" y="435.7">120</text><text x="430" y="405.6">130</text><text x="430" y="375.5">140</text><text x="430" y="345.4">150</text><text x="430" y="315.3">160</text><text x="430" y="285.2">170</text><text x="430" y="255.1">180</text><text x="430" y="225.0">190</text><text x="430" y="194.9">200</text><text x="430" y="164.8">210</text></g></svg>
<svg class="a" style="left:405px;top:119px" width="16" height="14" viewBox="0 0 16 14"><path d="M1 3 L5 1 L6 6 L3 8Z" fill="#8a8a30"/><text x="6" y="4" font-size="4.5" font-family="Liberation Sans" fill="#333">100</text><text x="6" y="8.5" font-size="4.5" font-family="Liberation Sans" fill="#333">50</text><text x="2" y="13" font-size="4.5" font-family="Liberation Sans" fill="#333">50</text></svg>
<div class="a" style="left:459px;top:113px;width:338px;height:368px;background:#fff;border-top:1px solid #a0a0a0;border-left:1px solid #a0a0a0"></div>
<div class="a" style="left:460px;top:114px;width:254px;height:366px;overflow:hidden;background:#a8a8a8">
<svg class="a" style="left:1px;top:1px;filter:blur(0.3px)" width="84" height="84" viewBox="0 0 336 335" preserveAspectRatio="none"><use href="#plant" style="--a1:#f58418;--a2:#f0dc10;--a2b:#c8f020;--a3:#70ec28;--eo:0.45"/></svg>
<div class="a" style="left:1px;top:85px;width:84px;height:12px;background:#fff"></div>
<div class="t" style="left:1px;top:86.8px;width:84px;text-align:center;font-size:7.6px;color:#222">Fo</div>
<svg class="a" style="left:86px;top:1px;filter:blur(0.3px)" width="83" height="84" viewBox="0 0 336 335" preserveAspectRatio="none"><use href="#plantB" style="--a1:#f0dc10;--a2:#f86a10;--a2b:#f86a10;--a3:#f0dc10;--eo:0.45"/></svg>
<div class="a" style="left:86px;top:85px;width:83px;height:12px;background:#fff"></div>
<div class="t" style="left:86px;top:86.8px;width:83px;text-align:center;font-size:7.6px;color:#222">Fm</div>
<svg class="a" style="left:170px;top:1px;filter:blur(0.3px)" width="84" height="84" viewBox="0 0 336 335" preserveAspectRatio="none"><use href="#plantB" style="--a1:#f8b810;--a2:#f04a10;--a2b:#f04a10;--a3:#f0dc10;--eo:0.45"/></svg>
<div class="a" style="left:170px;top:85px;width:84px;height:12px;background:#fff"></div>
<div class="t" style="left:170px;top:86.8px;width:84px;text-align:center;font-size:7.6px;color:#222">Fp</div>
<svg class="a" style="left:1px;top:98px;filter:blur(0.3px)" width="84" height="84" viewBox="0 0 336 335" preserveAspectRatio="none"><use href="#plantB" style="--a1:#f8b810;--a2:#f86a10;--a2b:#f86a10;--a3:#f0dc10;--eo:0.45"/></svg>
<div class="a" style="left:1px;top:182px;width:84px;height:13px;background:#fff"></div>
<div class="t" style="left:1px;top:184.3px;width:84px;text-align:center;font-size:7.6px;color:#222">Fm_L1</div>
<svg class="a" style="left:86px;top:98px;filter:blur(0.3px)" width="83" height="84" viewBox="0 0 336 335" preserveAspectRatio="none"><use href="#plantM" style="--a1:#f58418;--a2:#f0dc10;--a2b:#c8f020;--a3:#c8f020;--eo:0.45"/></svg>
<div class="a" style="left:86px;top:182px;width:83px;height:13px;background:#fff"></div>
<div class="t" style="left:86px;top:184.3px;width:83px;text-align:center;font-size:7.6px;color:#222">Fm_L2</div>
<svg class="a" style="left:170px;top:98px;filter:blur(0.3px)" width="84" height="84" viewBox="0 0 336 335" preserveAspectRatio="none"><use href="#plant" style="--a1:#f58418;--a2:#c8f020;--a2b:#70ec28;--a3:#70ec28;--eo:0.45"/></svg>
<div class="a" style="left:170px;top:182px;width:84px;height:13px;background:#fff"></div>
<div class="t" style="left:170px;top:184.3px;width:84px;text-align:center;font-size:7.6px;color:#222">Fm_L3</div>
<svg class="a" style="left:1px;top:196px;filter:blur(0.3px)" width="84" height="84" viewBox="0 0 336 335" preserveAspectRatio="none"><use href="#plant" style="--a1:#f58418;--a2:#c8f020;--a2b:#70ec28;--a3:#70ec28;--eo:0.45"/></svg>
<div class="a" style="left:1px;top:280px;width:84px;height:12px;background:#fff"></div>
<div class="t" style="left:1px;top:281.8px;width:84px;text-align:center;font-size:7.6px;color:#222">Fm_L4</div>
<svg class="a" style="left:86px;top:196px;filter:blur(0.3px)" width="83" height="84" viewBox="0 0 336 335" preserveAspectRatio="none"><use href="#plant" style="--a1:#f58418;--a2:#f0dc10;--a2b:#c8f020;--a3:#70ec28;--eo:0.45"/></svg>
<div class="a" style="left:86px;top:280px;width:83px;height:12px;background:#fff"></div>
<div class="t" style="left:86px;top:281.8px;width:83px;text-align:center;font-size:7.6px;color:#222">Fm_Lss</div>
<svg class="a" style="left:170px;top:196px;filter:blur(0.3px)" width="84" height="84" viewBox="0 0 336 335" preserveAspectRatio="none"><use href="#plantB" style="--a1:#f0dc10;--a2:#f86a10;--a2b:#f86a10;--a3:#f0dc10;--eo:0.45"/></svg>
<div class="a" style="left:170px;top:280px;width:84px;height:12px;background:#fff"></div>
<div class="t" style="left:170px;top:281.8px;width:84px;text-align:center;font-size:7.6px;color:#222">Fm_D1</div>
<svg class="a" style="left:1px;top:293px;filter:blur(0.3px)" width="84" height="84" viewBox="0 0 336 335" preserveAspectRatio="none"><use href="#plantB" style="--a1:#f8b810;--a2:#f86a10;--a2b:#f86a10;--a3:#f0dc10;--eo:0.45"/></svg>
<div class="a" style="left:1px;top:377px;width:84px;height:12px;background:#fff"></div>
<div class="t" style="left:1px;top:378.8px;width:84px;text-align:center;font-size:7.6px;color:#222"></div>
<svg class="a" style="left:86px;top:293px;filter:blur(0.3px)" width="83" height="84" viewBox="0 0 336 335" preserveAspectRatio="none"><use href="#plantB" style="--a1:#f0dc10;--a2:#f86a10;--a2b:#f86a10;--a3:#f0dc10;--eo:0.45"/></svg>
<div class="a" style="left:86px;top:377px;width:83px;height:12px;background:#fff"></div>
<div class="t" style="left:86px;top:378.8px;width:83px;text-align:center;font-size:7.6px;color:#222"></div>
<svg class="a" style="left:170px;top:293px;filter:blur(0.3px)" width="84" height="84" viewBox="0 0 336 335" preserveAspectRatio="none"><use href="#plantB" style="--a1:#f58418;--a2:#f58418;--a2b:#f58418;--a3:#c8f020;--eo:0.45"/></svg>
<div class="a" style="left:170px;top:377px;width:84px;height:12px;background:#fff"></div>
<div class="t" style="left:170px;top:378.8px;width:84px;text-align:center;font-size:7.6px;color:#222"></div>
</div>
<div class="a" style="left:460px;top:114px;width:86px;height:98px;border:1px dashed #666"></div>
<div class="a" style="left:782px;top:114px;width:14px;height:366px;background:#f0f0f0;border-left:1px solid #e4e4e4"></div>
<div class="a" style="left:786px;top:122px;width:0;height:0;border-left:3px solid transparent;border-right:3px solid transparent;border-bottom:3px solid #333"></div>
<div class="a" style="left:783px;top:127px;width:12px;height:11px;background:linear-gradient(90deg,#f4f4f4,#e0e0e0);border:1px solid #a0a0a0;border-radius:2px"></div>
<div class="a" style="left:786px;top:474px;width:0;height:0;border-left:3px solid transparent;border-right:3px solid transparent;border-top:3px solid #333"></div>
<svg class="a" style="left:467px;top:487px" width="11" height="10" viewBox="0 0 11 10"><rect x="0.5" y="0.5" width="10" height="9" fill="#eee" stroke="#777"/><rect x="1" y="1" width="9" height="4" fill="#2a9a2a"/><path d="M2 2 L4 4 L6 2 L8 4" stroke="#ff0" stroke-width="0.8" fill="none"/><rect x="1" y="6" width="9" height="3" fill="#8060a0"/></svg>
<div class="a" style="left:488px;top:485px;width:289px;height:21px;border-top:1px solid #b0b0b0;border-left:1px solid #b0b0b0;border-right:1px solid #fff;border-bottom:1px solid #fff;background:#f0f0f0"></div>
<div class="t" style="left:557.6px;top:491.17px;font-size:9.6px;font-weight:bold;color:#111">Fo=average(frame,startFo,endFo)</div>
<div class="gb" style="left:467px;top:511px;width:91px;height:53px"></div>
<div class="gl" style="left:471.7px;top:506.77px;font-size:8.9px">Display Mode</div>
<div class="a" style="left:473px;top:520.0px;width:8px;height:8px;border-radius:50%;border:1px solid #999;border-right-color:#eee;border-bottom-color:#eee;background:#fafafa"></div>
<div class="a" style="left:475.5px;top:522.5px;width:3px;height:3px;border-radius:50%;background:#111"></div>
<div class="t" style="left:484.7px;top:520.14px;font-size:8.7px;">Color by Pixel</div>
<div class="a" style="left:473px;top:535.0px;width:8px;height:8px;border-radius:50%;border:1px solid #999;border-right-color:#eee;border-bottom-color:#eee;background:#fafafa"></div>
<div class="t" style="left:484.7px;top:535.14px;font-size:8.7px;">Color by Object</div>
<div class="a" style="left:473px;top:550.0px;width:8px;height:8px;border-radius:50%;border:1px solid #999;border-right-color:#eee;border-bottom-color:#eee;background:#fafafa"></div>
<div class="t" style="left:484.7px;top:550.14px;font-size:8.7px;">Color By Avg</div>
<div class="gb" style="left:467px;top:575px;width:91px;height:94px"></div>
<div class="gl" style="left:471.7px;top:570.47px;font-size:8.9px">Options</div>
<div class="cb" style="left:470px;top:582.8px"></div>
<svg class="a" style="left:470px;top:582.8px" width="8" height="8"><path d="M1.5 4 L3.3 6 L6.8 1.8" stroke="#111" stroke-width="1.4" fill="none"/></svg>
<div class="t" style="left:482px;top:583.02px;font-size:8.6px;">Show Number</div>
<div class="cb" style="left:470px;top:599.7px"></div>
<svg class="a" style="left:470px;top:599.7px" width="8" height="8"><path d="M1.5 4 L3.3 6 L6.8 1.8" stroke="#111" stroke-width="1.4" fill="none"/></svg>
<div class="t" style="left:482px;top:599.92px;font-size:8.6px;">Histogram</div>
<div class="cb" style="left:470px;top:617.3px"></div>
<div class="t" style="left:482px;top:617.52px;font-size:8.6px;">Checkpoint</div>
<div class="cb cbd" style="left:470px;top:635.7px"></div>
<div class="t" style="left:482px;top:635.92px;font-size:8.6px;color:#a8a8a8">Obj. Calibration</div>
<div class="cb cbd" style="left:470px;top:654.7px"></div>
<div class="t" style="left:482px;top:654.92px;font-size:8.6px;color:#a8a8a8">Chlorophyll</div>
<div class="gb" style="left:563px;top:512px;width:117px;height:114px"></div>
<div class="gl" style="left:567.5px;top:507.67px;font-size:8.9px">Value Range</div>
<div class="cb" style="left:583px;top:522.0px;border-color:#a0a0a0"></div>
<div class="t" style="left:595px;top:522.14px;font-size:8.7px;">Group Color</div>
<div class="cb" style="left:583px;top:540.5px;border-color:#a0a0a0"></div>
<div class="t" style="left:595px;top:540.64px;font-size:8.7px;">Manual Color</div>
<div class="t" style="left:572.5px;top:557.89px;font-size:8.4px;color:#a8a8a8">Limit</div>
<div class="t" style="left:595px;top:557.89px;font-size:8.4px;color:#a8a8a8">218.2</div>
<div class="t" style="left:569.5px;top:575.49px;font-size:8.4px;color:#a8a8a8">Max</div>
<div class="a" style="left:591px;top:572px;width:77px;height:14px;background:#fff;border-top:1px solid #888;border-left:1px solid #888;border-right:1px solid #e8e8e8;border-bottom:1px solid #e8e8e8"></div>
<div class="t" style="left:593px;top:575.49px;font-size:8.4px;color:#999">217.44</div>
<div class="t" style="left:569.5px;top:596.89px;font-size:8.4px;color:#a8a8a8">Min</div>
<div class="a" style="left:592px;top:593px;width:77px;height:14px;background:#fff;border-top:1px solid #888;border-left:1px solid #888;border-right:1px solid #e8e8e8;border-bottom:1px solid #e8e8e8"></div>
<div class="t" style="left:594px;top:596.59px;font-size:8.4px;color:#999">23.7</div>
<div class="t" style="left:569.5px;top:612.59px;font-size:8.4px;color:#a8a8a8">Limit</div>
<div class="t" style="left:595px;top:612.59px;font-size:8.4px;color:#a8a8a8">23.7</div>
<div class="gb" style="left:686px;top:512px;width:90px;height:83px"></div>
<div class="gl" style="left:690px;top:507.37px;font-size:8.9px">Numeric</div>
<div class="btn" style="left:690px;top:517px;width:80px;height:16px"></div>
<div class="t" style="left:690px;top:520.55px;width:79px;text-align:center;font-size:8.8px">Add Checkpoint</div>
<div class="btn" style="left:690px;top:536px;width:80px;height:16px"></div>
<div class="t" style="left:690px;top:540.75px;width:79px;text-align:center;font-size:8.8px">Delete Checkpoint</div>
<div class="btn" style="left:690px;top:556px;width:80px;height:16px"></div>
<div class="t" style="left:690px;top:559.55px;width:79px;text-align:center;font-size:8.8px">Edit Checkpoint</div>
<div class="btn" style="left:690px;top:575px;width:37px;height:16px"></div>
<div class="t" style="left:690px;top:579.55px;width:36px;text-align:center;font-size:8.8px">Save</div>
<div class="btn" style="left:731px;top:575px;width:37px;height:16px"></div>
<div class="t" style="left:731px;top:579.55px;width:36px;text-align:center;font-size:8.8px">Load</div>
<div class="btn" style="left:690px;top:601px;width:82px;height:25px"></div>
<div class="t" style="left:716px;top:609.13px;font-size:9.3px;font-weight:bold;color:#111">Analyze</div>
<svg class="a" style="left:703px;top:607px" width="8" height="12" viewBox="0 0 8 12"><path d="M3 1 L5 1 L5 5 L7.5 10 C7.5 11.5 6 11.5 4 11.5 C2 11.5 0.5 11.5 0.5 10 L3 5Z" fill="#c8d4f0" stroke="#445" stroke-width="0.6"/><ellipse cx="4" cy="9.5" rx="3.2" ry="2" fill="#1a2ad0"/></svg>
<div class="a" style="left:4px;top:497px;width:397px;height:1px;background:#c8c8c8"></div>
<div class="a" style="left:4px;top:498px;width:397px;height:1px;background:#fff"></div>
<div class="a" style="left:400px;top:515px;width:1px;height:218px;background:#a0a0a0"></div>
<div class="a" style="left:4px;top:732px;width:397px;height:1px;background:#8a8a8a"></div>
<div class="t" style="left:11.5px;top:502.80px;font-size:8.5px;">Graph</div>
<div class="t" style="left:46px;top:503.67px;font-size:8.9px;">Numeric</div>
<div class="t" style="left:89px;top:503.67px;font-size:8.9px;">Numeric Avg</div>
<div class="t" style="left:147px;top:503.67px;font-size:8.9px;">Histogram</div>
<div class="t" style="left:195.8px;top:503.67px;font-size:8.9px;">Notepad</div>
<div class="a" style="left:43px;top:500px;width:1px;height:15px;background:#777"></div>
<div class="a" style="left:83px;top:500px;width:1px;height:15px;background:#777"></div>
<div class="a" style="left:143px;top:500px;width:1px;height:15px;background:#777"></div>
<div class="a" style="left:191px;top:500px;width:1px;height:15px;background:#777"></div>
<div class="a" style="left:234px;top:500px;width:1px;height:15px;background:#777"></div>
<svg class="a" style="left:48px;top:521px" width="175" height="16" viewBox="0 0 175 16">
<path d="M4 8 L4 12 M4 8 L9 8 L9 12 M3 12 L12 12 M2.5 14 L14 14" stroke="#333" stroke-width="1.1" fill="none"/><path d="M6 10 L6 12 M11 9 L11 12" stroke="#333" stroke-width="1"/><path d="M12 2.5 L14.5 5 L12 7.5 L9.5 5Z" fill="#18b8e8"/>
<rect x="25.5" y="4.5" width="9" height="8" fill="#fff" stroke="#7070a0" stroke-width="0.9"/><path d="M26 10 L28.5 7 L31 9 L34 6.5" stroke="#d02828" stroke-width="0.9" fill="none"/><path d="M26 8 L29 9.5 L32 7.5 L34 9" stroke="#2840c8" stroke-width="0.9" fill="none"/>
<path d="M49.5 3.5 L57 3.5 M49.5 14 L57 14" stroke="#222" stroke-width="1.1"/><path d="M53.2 5 L50.8 8 L55.6 8Z M53.2 12.5 L50.8 9.5 L55.6 9.5Z" fill="#222"/>
<path d="M71 5 L71 12 M82 5 L82 12" stroke="#222" stroke-width="1.1"/><path d="M71.5 8.5 L75 6 L75 11Z M81.5 8.5 L78 6 L78 11Z" fill="#222"/>
<rect x="94.5" y="3.5" width="11" height="11" fill="none" stroke="#444" stroke-dasharray="1.2 1"/><path d="M100 4.5 L98 7 L102 7Z M100 13.5 L98 11 L102 11Z M95.5 9 L98 7 L98 11Z M104.5 9 L102 7 L102 11Z" fill="#222"/>
<text x="119.5" y="12.3" font-family="Liberation Sans" font-size="9" fill="#444">L/L</text>
<rect x="141" y="8.5" width="10" height="4.5" fill="#aaa" stroke="#555" stroke-width="0.8"/><rect x="143" y="4.5" width="6" height="4" fill="#fff" stroke="#555" stroke-width="0.8"/><path d="M142.5 14.5 L149.5 14.5" stroke="#777"/>
</svg>
<div class="t" style="left:198px;top:522.92px;font-size:8.6px;font-weight:bold">netics</div>
<div class="cb" style="left:338px;top:523px;border-color:#999"></div>
<div class="t" style="left:350px;top:523.44px;font-size:8.7px;">Normalize</div>
<svg class="a" style="left:0;top:0" width="400" height="740" font-family="Liberation Sans"><rect x="41.25" y="537.5" width="347" height="159.5" fill="#fff" stroke="#222" stroke-width="1"/><line x1="42" y1="551.75" x2="388" y2="551.75" stroke="#b0b0b0" stroke-width="0.8" stroke-dasharray="4 3"/><line x1="42" y1="626.25" x2="388" y2="626.25" stroke="#b0b0b0" stroke-width="0.8" stroke-dasharray="4 3"/><line x1="110.25" y1="538" x2="110.25" y2="697" stroke="#b0b0b0" stroke-width="0.8" stroke-dasharray="4 3"/><line x1="179.25" y1="538" x2="179.25" y2="697" stroke="#b0b0b0" stroke-width="0.8" stroke-dasharray="4 3"/><line x1="248.25" y1="538" x2="248.25" y2="697" stroke="#b0b0b0" stroke-width="0.8" stroke-dasharray="4 3"/><line x1="317.25" y1="538" x2="317.25" y2="697" stroke="#b0b0b0" stroke-width="0.8" stroke-dasharray="4 3"/><line x1="38.5" y1="551.30" x2="41.25" y2="551.30" stroke="#333" stroke-width="1"/><line x1="38.5" y1="566.20" x2="41.25" y2="566.20" stroke="#333" stroke-width="1"/><line x1="38.5" y1="581.10" x2="41.25" y2="581.10" stroke="#333" stroke-width="1"/><line x1="38.5" y1="596.00" x2="41.25" y2="596.00" stroke="#333" stroke-width="1"/><line x1="38.5" y1="610.90" x2="41.25" y2="610.90" stroke="#333" stroke-width="1"/><line x1="38.5" y1="625.80" x2="41.25" y2="625.80" stroke="#333" stroke-width="1"/><line x1="38.5" y1="640.70" x2="41.25" y2="640.70" stroke="#333" stroke-width="1"/><line x1="38.5" y1="655.60" x2="41.25" y2="655.60" stroke="#333" stroke-width="1"/><line x1="38.5" y1="670.50" x2="41.25" y2="670.50" stroke="#333" stroke-width="1"/><line x1="38.5" y1="685.40" x2="41.25" y2="685.40" stroke="#333" stroke-width="1"/><text x="20.5" y="554.5" font-size="7.3" fill="#333">800</text><text x="20.5" y="629.3" font-size="7.3" fill="#333">400</text><line x1="55.10" y1="697" x2="55.10" y2="700.5" stroke="#333" stroke-width="1"/><line x1="68.95" y1="697" x2="68.95" y2="700.5" stroke="#333" stroke-width="1"/><line x1="82.80" y1="697" x2="82.80" y2="700.5" stroke="#333" stroke-width="1"/><line x1="96.65" y1="697" x2="96.65" y2="700.5" stroke="#333" stroke-width="1"/><line x1="110.50" y1="697" x2="110.50" y2="700.5" stroke="#333" stroke-width="1"/><line x1="124.35" y1="697" x2="124.35" y2="700.5" stroke="#333" stroke-width="1"/><line x1="138.20" y1="697" x2="138.20" y2="700.5" stroke="#333" stroke-width="1"/><line x1="152.05" y1="697" x2="152.05" y2="700.5" stroke="#333" stroke-width="1"/><line x1="165.90" y1="697" x2="165.90" y2="700.5" stroke="#333" stroke-width="1"/><line x1="179.75" y1="697" x2="179.75" y2="700.5" stroke="#333" stroke-width="1"/><line x1="193.60" y1="697" x2="193.60" y2="700.5" stroke="#333" stroke-width="1"/><line x1="207.45" y1="697" x2="207.45" y2="700.5" stroke="#333" stroke-width="1"/><line x1="221.30" y1="697" x2="221.30" y2="700.5" stroke="#333" stroke-width="1"/><line x1="235.15" y1="697" x2="235.15" y2="700.5" stroke="#333" stroke-width="1"/><line x1="249.00" y1="697" x2="249.00" y2="700.5" stroke="#333" stroke-width="1"/><line x1="262.85" y1="697" x2="262.85" y2="700.5" stroke="#333" stroke-width="1"/><line x1="276.70" y1="697" x2="276.70" y2="700.5" stroke="#333" stroke-width="1"/><line x1="290.55" y1="697" x2="290.55" y2="700.5" stroke="#333" stroke-width="1"/><line x1="304.40" y1="697" x2="304.40" y2="700.5" stroke="#333" stroke-width="1"/><line x1="318.25" y1="697" x2="318.25" y2="700.5" stroke="#333" stroke-width="1"/><line x1="332.10" y1="697" x2="332.10" y2="700.5" stroke="#333" stroke-width="1"/><line x1="345.95" y1="697" x2="345.95" y2="700.5" stroke="#333" stroke-width="1"/><line x1="359.80" y1="697" x2="359.80" y2="700.5" stroke="#333" stroke-width="1"/><line x1="373.65" y1="697" x2="373.65" y2="700.5" stroke="#333" stroke-width="1"/><line x1="387.50" y1="697" x2="387.50" y2="700.5" stroke="#333" stroke-width="1"/><text x="110.25" y="712.9" font-size="7.3" fill="#333" text-anchor="middle">40</text><text x="179.25" y="712.9" font-size="7.3" fill="#333" text-anchor="middle">80</text><text x="248.25" y="712.9" font-size="7.3" fill="#333" text-anchor="middle">120</text><text x="317.25" y="712.9" font-size="7.3" fill="#333" text-anchor="middle">160</text><text x="386.25" y="712.9" font-size="7.3" fill="#333" text-anchor="middle">200</text><text x="373" y="722.6" font-size="7.3" fill="#333">time [s]</text><rect x="149" y="717" width="10" height="3" fill="#1818c8"/><text x="165.3" y="721" font-size="7" fill="#333">Area 1</text><rect x="192.6" y="717" width="10" height="3" fill="#30e030"/><text x="208.9" y="721" font-size="7" fill="#333">Area 2</text><rect x="236.8" y="717" width="10" height="3" fill="#e02828"/><text x="253.10000000000002" y="721" font-size="7" fill="#333">Area 3</text><polyline points="41.8,678.5 44.0,677.4 45.1,562.5 46.3,562.5 46.7,614.3 47.4,641.4 50.8,657.0 57.5,668.4 68.8,674.0 80.0,675.1 92.4,676.3 94.0,569.3 96.0,569.0 100.0,576.0 104.0,584.0 109.0,598.0 110.2,592.0 111.0,582.0 112.0,589.0 112.4,606.0 116.0,620.0 122.0,632.0 128.0,637.4 128.6,625.0 129.2,626.0 129.8,639.5 138.0,644.0 146.0,648.0 146.6,632.0 147.2,633.0 147.8,649.5 160.0,653.6 170.0,656.0 180.0,658.0 181.0,637.0 181.6,638.0 182.2,659.0 194.0,660.0 210.0,661.2 213.4,662.7 214.5,657.0 215.6,631.9 216.8,639.1 217.2,670.6 228.0,672.9 265.2,675.8 266.8,563.6 268.1,585.0 269.7,630.0 273.0,659.4 279.8,670.6 300.1,675.1 318.1,676.3 319.7,554.6 320.8,580.5 322.6,630.0 326.0,659.4 333.9,670.6 354.1,675.1 369.9,676.9 371.7,550.1 373.1,580.5 375.5,634.6 378.9,659.4 388.0,672.9" fill="none" stroke="#38d838" stroke-width="1.1" stroke-linejoin="round"/><polyline points="41.8,684.0 44.0,683.0 45.6,591.8 47.4,614.3 50.8,652.6 57.5,666.0 68.8,679.7 80.0,681.5 92.4,682.0 94.0,598.4 98.0,600.0 104.0,612.0 110.0,624.0 111.4,606.0 112.4,628.0 116.0,634.0 122.0,642.0 128.0,649.6 128.6,638.0 129.2,639.0 130.0,652.0 138.0,658.0 146.0,662.0 146.6,648.0 147.4,649.0 148.0,662.0 160.0,666.0 170.0,668.0 180.0,669.6 181.0,650.0 181.6,651.0 182.4,671.0 194.0,671.6 210.0,670.2 214.5,671.1 215.6,643.2 216.8,675.1 223.5,678.5 265.2,681.9 266.8,596.3 268.6,614.3 270.4,652.6 274.2,672.9 284.3,678.5 318.1,681.9 319.7,587.3 321.5,621.1 324.9,663.9 331.6,675.1 345.1,679.6 369.9,682.3 371.7,582.8 373.5,618.8 376.7,657.1 383.4,672.9 388.0,676.3" fill="none" stroke="#b83a3a" stroke-width="1.1" stroke-linejoin="round"/><polyline points="41.8,672.9 44.0,670.6 45.8,635.7 48.5,645.9 51.9,657.0 56.4,663.9 64.3,665.0 93.6,665.5 94.0,598.4 100.0,600.0 120.0,602.4 140.0,603.6 170.0,604.0 210.0,604.2 216.3,604.6 217.9,625.6 220.1,645.9 223.5,652.0 232.5,654.9 265.2,656.0 266.3,652.6 268.1,605.3 269.7,612.0 273.0,639.0 276.4,649.2 284.3,652.6 315.9,654.9 318.1,652.6 320.4,603.0 322.6,616.6 326.0,641.4 329.4,649.2 340.6,652.6 369.9,653.7 371.7,607.6 374.4,612.0 377.8,636.8 381.2,648.1 388.0,651.5" fill="none" stroke="#3030a0" stroke-width="1.1" stroke-linejoin="round"/></svg>
</body></html>
